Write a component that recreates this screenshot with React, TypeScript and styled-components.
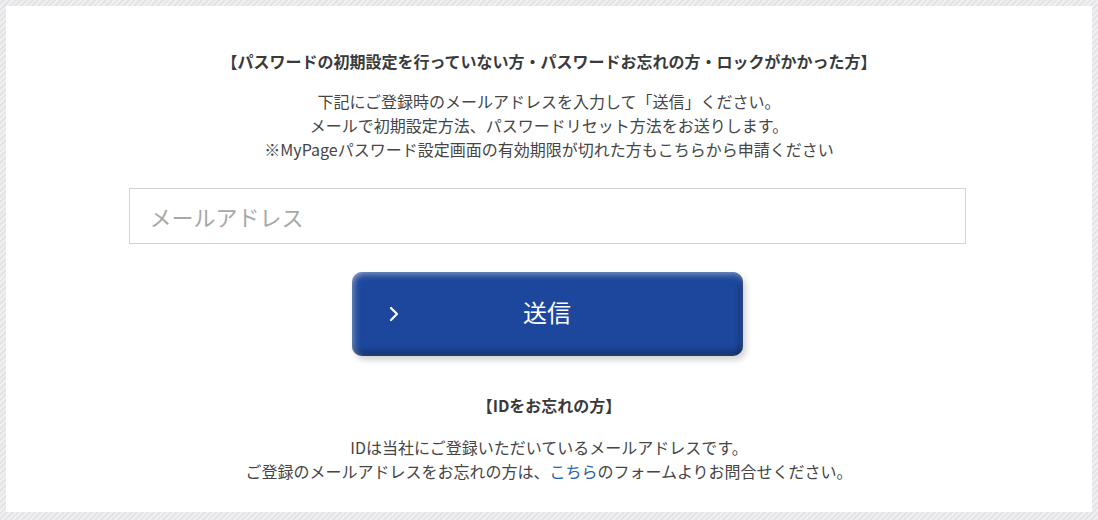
import React, { ReactElement } from 'react';
import styled, { createGlobalStyle } from 'styled-components';

const GlobalStyle = createGlobalStyle`
  html, body {
    margin: 0;
    padding: 0;
  }
  body {
    font-family: "Noto Sans CJK JP", "Noto Sans", sans-serif;
    color: #444;
    background: repeating-linear-gradient(
      -45deg,
      #e4e4e6 0px,
      #e4e4e6 2px,
      #f0f0f2 2px,
      #f0f0f2 4px
    );
    min-height: 520px;
  }
`;

const Page = styled.div`
  padding: 6px 6px 8px 6px;
  box-sizing: border-box;
  height: 520px;
`;

const Card = styled.main`
  background: #fff;
  height: 100%;
  box-sizing: border-box;
  padding: 44px 0 0;
  display: flex;
  flex-direction: column;
  align-items: center;
`;

const Heading = styled.h2<{ $gap: number }>`
  margin: 0 0 ${props => props.$gap}px;
  font-size: 16px;
  font-weight: 700;
  line-height: 22px;
  color: #3a3a3a;
  text-align: center;
`;

const Lead = styled.p`
  margin: 0;
  font-size: 16px;
  line-height: 24px;
  text-align: center;
  color: #454545;
`;

const EmailInput = styled.input`
  display: block;
  width: 837px;
  height: 56px;
  box-sizing: border-box;
  margin: 27px 0 0 -4px;
  padding: 0 20px;
  border: 1px solid #d4d4d4;
  font-family: inherit;
  font-size: 22px;
  color: #444;
  outline: none;

  &::placeholder {
    color: #a8a8a8;
  }
`;

const SubmitButton = styled.button`
  position: relative;
  width: 391px;
  height: 84px;
  margin: 28px 0 0 -4px;
  padding: 0 0 6px;
  border: none;
  border-radius: 10px;
  background: #1c479c;
  color: #fff;
  font-family: inherit;
  font-size: 24px;
  cursor: pointer;
  display: flex;
  align-items: center;
  justify-content: center;
  box-shadow:
    inset 0 5px 6px -2px rgba(255, 255, 255, 0.35),
    inset 5px 0 6px -2px rgba(255, 255, 255, 0.3),
    inset 0 -6px 7px -2px rgba(0, 0, 0, 0.35),
    inset -5px 0 6px -2px rgba(0, 0, 0, 0.2),
    3px 4px 6px rgba(0, 0, 0, 0.18);
`;

const Chevron = styled.svg`
  position: absolute;
  left: 36px;
  top: 50%;
  transform: translateY(-50%);
`;

const Section = styled.section`
  margin-top: 38px;
  display: flex;
  flex-direction: column;
  align-items: center;
`;

const Link = styled.a`
  color: #1f63a8;
  text-decoration: none;
`;

export default function App(): ReactElement {
  return (
    <>
      <GlobalStyle />
      <Page>
        <Card>
          <Heading $gap={17}>【パスワードの初期設定を行っていない方・パスワードお忘れの方・ロックがかかった方】</Heading>
          <Lead>
            下記にご登録時のメールアドレスを入力して「送信」ください。
            <br />
            メールで初期設定方法、パスワードリセット方法をお送りします。
            <br />
            ※MyPageパスワード設定画面の有効期限が切れた方もこちらから申請ください
          </Lead>
          <EmailInput type="email" placeholder="メールアドレス" />
          <SubmitButton type="button">
            <Chevron width="12" height="18" viewBox="0 0 12 18" fill="none">
              <path d="M3 3 L9 9 L3 15" stroke="#fff" strokeWidth="2.2" strokeLinecap="round" strokeLinejoin="round" />
            </Chevron>
            送信
          </SubmitButton>
          <Section>
            <Heading $gap={19}>【IDをお忘れの方】</Heading>
            <Lead>
              IDは当社にご登録いただいているメールアドレスです。
              <br />
              ご登録のメールアドレスをお忘れの方は、<Link href="#">こちら</Link>のフォームよりお問合せください。
            </Lead>
          </Section>
        </Card>
      </Page>
    </>
  );
}
